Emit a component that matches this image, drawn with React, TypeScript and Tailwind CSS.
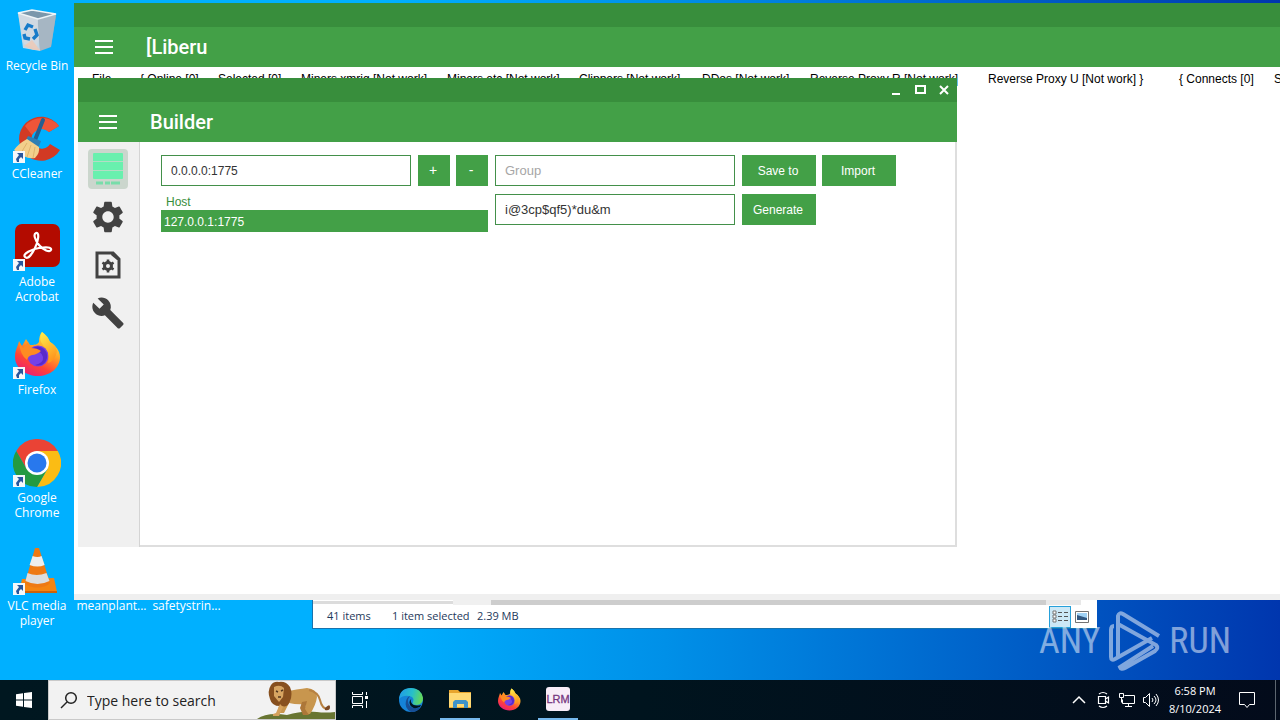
import { MdBuild, MdSettings } from "react-icons/md";
import type { ReactNode } from "react";

const MENU = [
  { label: "File", gap: "ml-[18px] w-12" },
  { label: "{ Online [0]", gap: "w-[78px]" },
  { label: "Selected [0]", gap: "w-[83px]" },
  { label: "Miners xmrig [Not work]", gap: "w-[146px]" },
  { label: "Miners etc [Not work]", gap: "w-[132px]" },
  { label: "Clippers [Not work]", gap: "w-[123px]" },
  { label: "DDos [Not work]", gap: "w-[108px]" },
  { label: "Reverse Proxy R [Not work]", gap: "w-[178px]" },
  { label: "Reverse Proxy U [Not work] }", gap: "w-[191px]" },
  { label: "{ Connects [0]", gap: "w-[95px]" },
  { label: "Selected [0]", gap: "w-[83px]" },
];

function BinIcon() {
  return (
    <svg viewBox="0 0 48 48" className="size-12" aria-hidden="true">
      <path d="M5 6 28 12 24 42 11 37Z" fill="#b6c4cf" />
      <path d="M24 12 43 8 38 39 26 43Z" fill="#8fa6b8" />
      <path d="M5 6 25 12 27 44 10 41Z" fill="#d3dce3" opacity=".9" />
      <path d="M25 12 43 8 38 40 27 44Z" fill="#a6b6c3" />
      <path d="M5 6 19 3 43 7 25 12Z" fill="#7b97ab" stroke="#eff4f7" strokeWidth="1.5" />
      <path d="m11 39 8-6 8 10-7 0Z" fill="#f3c6ae" opacity=".7" />
      <g fill="none" stroke="#167bc9" strokeWidth="3.4">
        <path d="m12 23 3-5 5 2" />
        <path d="m22 22 2 6-4 4" />
        <path d="m17 32-5-1-1-4" />
      </g>
    </svg>
  );
}

function CCleanerIcon() {
  return (
    <svg viewBox="0 0 48 48" className="size-12" aria-hidden="true">
      <path d="M46 11A22 22 0 1 0 47 35L37 29A10 10 0 1 1 36 17Z" fill="#d23a24" />
      <path d="M46 11A22 22 0 0 0 12 11L19 20Q27 10 36 17Z" fill="#ef5538" />
      <path d="m30 5-8 20" stroke="#245f91" strokeWidth="4" strokeLinecap="round" />
      <path d="m15 21 13 5-3 8-13-7Z" fill="#2f7fb4" />
      <path d="M14 24Q5 29 1 35q12 10 21 8 5-5 4-11Z" fill="#f2cf8b" />
      <path d="m14 28-6 10m10-8-4 12m8-10-2 11" stroke="#dfb36b" />
    </svg>
  );
}

function AcrobatIcon() {
  return (
    <svg viewBox="0 0 48 48" className="size-12" aria-hidden="true">
      <rect x="2" y="1" width="45" height="43" rx="7" fill="#b30b00" />
      <path
        d="M23 10c4-1 2 9-1 15s-7 12-10 9 7-8 14-9 13-1 12 2-8 0-12-5-6-11-3-12Z"
        fill="none"
        stroke="#fff"
        strokeWidth="2.2"
      />
    </svg>
  );
}

function FirefoxIcon({ className = "size-12" }: { className?: string }) {
  return (
    <svg viewBox="0 0 48 48" className={className} aria-hidden="true">
      <defs>
        <linearGradient id="fox" x1=".8" y1="0" x2=".25" y2="1">
          <stop offset="0" stopColor="#fff44f" />
          <stop offset=".4" stopColor="#ffa025" />
          <stop offset=".7" stopColor="#ff4436" />
          <stop offset="1" stopColor="#e81a7c" />
        </linearGradient>
        <linearGradient id="foxTail" x1="0" y1="0" x2=".4" y2="1">
          <stop offset="0" stopColor="#fff14c" />
          <stop offset="1" stopColor="#ff981e" />
        </linearGradient>
      </defs>
      <path
        d="M29 1c4 3 6 7 8 10 6 4 10 9 10 15 0 11-10 19-22 19S2 37 2 26c0-7 3-11 4-16l3 5 4-7 4 6c4 0 7 0 9-3 0-4 1-8 3-10Z"
        fill="url(#fox)"
      />
      <circle cx="25" cy="25" r="10.5" fill="#7541e8" />
      <path d="M18 18q7-5 13 0 5 5 2 12-4 6-11 4 9-2 8-8-2-7-12-8Z" fill="#592acb" />
      <path d="M6 11l4 6 5-6 3 6q6 0 10 3-5 4-9 4-4 1-5 5Q7 24 6 11Z" fill="#ff8b22" />
      <path d="M29 1q-4 7 1 13 8 7 5 18 7-2 9-12-1-6-7-9-2-6-8-10Z" fill="url(#foxTail)" />
    </svg>
  );
}

function ChromeIcon() {
  return (
    <svg viewBox="0 0 48 48" className="size-12" aria-hidden="true">
      <path d="M3.2 12A24 24 0 0 1 44.8 12L24 12 13.6 30Z" fill="#ea4335" />
      <path d="M44.8 12A24 24 0 0 1 24 48L34.4 30 24 12Z" fill="#fbbc14" />
      <path d="M24 48A24 24 0 0 1 3.2 12L13.6 30 34.4 30Z" fill="#249a41" />
      <circle cx="24" cy="24" r="12" fill="#fff" />
      <circle cx="24" cy="24" r="9.5" fill="#2878ed" />
    </svg>
  );
}

function VlcIcon() {
  return (
    <svg viewBox="0 0 48 48" className="size-12" aria-hidden="true">
      <path d="m9 32 32-1 3 14H6Z" fill="#f58410" />
      <path d="M6 44h38v2H6Z" fill="#cc6208" />
      <path d="M22 1h4l11 35c-5 6-21 6-25 0Z" fill="#ee7913" />
      <path d="M19.6 9q5 2 9 0l3 9q-7 3-15 0Z" fill="#eee" />
      <path d="M14.5 26q9 4 19 0l3 8q-12 6-24 0Z" fill="#ddd" />
    </svg>
  );
}

const SHORTCUTS: { lines: string[]; icon: ReactNode; linked: boolean }[] = [
  { lines: ["Recycle Bin"], icon: <BinIcon />, linked: false },
  { lines: ["CCleaner"], icon: <CCleanerIcon />, linked: true },
  { lines: ["Adobe", "Acrobat"], icon: <AcrobatIcon />, linked: true },
  { lines: ["Firefox"], icon: <FirefoxIcon />, linked: true },
  { lines: ["Google", "Chrome"], icon: <ChromeIcon />, linked: true },
  { lines: ["VLC media", "player"], icon: <VlcIcon />, linked: true },
];

function Shortcut({ lines, icon, linked }: { lines: string[]; icon: ReactNode; linked: boolean }) {
  return (
    <button type="button" className="flex h-[108px] w-[74px] flex-col items-center text-[12px] leading-[15px] text-white">
      <span className="relative mb-[3px] block">
        {icon}
        {linked && (
          <svg viewBox="0 0 12 12" className="absolute bottom-0 left-0 size-3" aria-hidden="true">
            <path d="M0 0h12v12H0Z" fill="#f4f7fa" />
            <path d="M4 2h6v6L8 6 6 8v3H4L3 8l3-4Z" fill="#28569c" />
          </svg>
        )}
      </span>
      {lines.map((line) => (
        <span key={line} className="block whitespace-nowrap">
          {line}
        </span>
      ))}
    </button>
  );
}

function AppBar({ title }: { title: string }) {
  return (
    <header className="flex h-10 shrink-0 items-center bg-[#43a047] pl-5 text-white">
      <button type="button" aria-label="Menu">
        <svg viewBox="0 0 20 16" className="h-4 w-5" aria-hidden="true">
          <path d="M1 2h18M1 8h18M1 14h18" stroke="currentColor" strokeWidth="2" />
        </svg>
      </button>
      <h1 className="ml-8 font-[Roboto,sans-serif] text-[20px] font-medium leading-6">{title}</h1>
    </header>
  );
}

function ActionButton({ label, className }: { label: string; className: string }) {
  return (
    <button type="button" className={`h-[31px] bg-[#43a047] pr-[2px] text-white ${className}`}>
      {label}
    </button>
  );
}

/** Icon strip on the left of the builder window. */
function ToolTabs() {
  return (
    <nav className="flex w-[62px] shrink-0 flex-col items-center gap-2 border-r border-[#d4d4d4] bg-[#f0f0f0] pr-px pt-[7px] text-[#424242]">
      <button type="button" aria-label="Hosts" className="flex h-10 w-10 items-center justify-center rounded bg-[#cbd6cd]">
        <svg viewBox="0 0 32 36" className="h-9 w-8" aria-hidden="true">
          <rect x="1" y="2" width="30" height="26" rx="1" fill="#69f0ae" />
          <path d="M1 10.5h30M1 19.5h30" stroke="#b4dcc5" />
          <path d="M4 32h7m2 0h5m1 0h9" stroke="#78ddaa" strokeWidth="3" />
        </svg>
      </button>
      <button type="button" aria-label="Settings" className="flex h-10 w-10 items-center justify-center">
        <MdSettings size={38} />
      </button>
      <button type="button" aria-label="Assembly" className="flex h-10 w-10 items-center justify-center">
        <svg viewBox="0 0 26 28" className="h-7 w-[26px]" aria-hidden="true">
          <path d="M2 2h16l6 6v18H2Z" fill="none" stroke="currentColor" strokeWidth="3" />
          <path d="m17 1 8 8h-3l-6-5Z" fill="currentColor" />
          <circle cx="13" cy="15" r="3.5" fill="none" stroke="currentColor" strokeWidth="3" />
          <path
            d="M13 8.500v3m0 7v3M7.400 11.700 10 13.200m6 3.600 2.600 1.500M7.400 18.300 10 16.800m6-3.600 2.600-1.500"
            stroke="currentColor"
            strokeWidth="2.6"
          />
        </svg>
      </button>
      <button type="button" aria-label="Tools" className="flex h-10 w-10 items-center justify-center">
        <MdBuild size={34} />
      </button>
    </nav>
  );
}

function BuilderWindow() {
  const field = "h-[31px] border border-[#43904a] bg-white px-[9px] text-[#333] outline-none placeholder:text-[#a6a6a6]";
  return (
    <section className="absolute left-[78px] top-[78px] flex h-[469px] w-[879px] flex-col bg-white font-['Liberation_Sans',Arial,sans-serif]">
      <div className="flex h-6 shrink-0 items-center justify-end bg-[#388e3c] pr-px text-white">
        <button type="button" aria-label="Minimize" className="flex w-6 justify-center">
          <svg viewBox="0 0 16 16" className="size-4" aria-hidden="true">
            <path d="M4 11h8v2H4Z" fill="currentColor" />
          </svg>
        </button>
        <button type="button" aria-label="Maximize" className="flex w-6 justify-center">
          <svg viewBox="0 0 16 16" className="size-4" aria-hidden="true">
            <path d="M4 4h9v7H4Z" fill="none" stroke="currentColor" strokeWidth="2" />
          </svg>
        </button>
        <button type="button" aria-label="Close" className="flex w-6 justify-center">
          <svg viewBox="0 0 16 16" className="size-4" aria-hidden="true">
            <path d="m4 4 8 8m0-8-8 8" stroke="currentColor" strokeWidth="2" />
          </svg>
        </button>
      </div>
      <AppBar title="Builder" />
      <div className="flex min-h-0 flex-1">
        <ToolTabs />
        <div className="flex flex-1 items-start gap-[7px] border-b-2 border-r-2 border-[#dedede] pl-[21px] pt-[13px]">
          <div className="w-[327px]">
            <div className="flex">
              <input aria-label="Host address" defaultValue="0.0.0.0:1775" className={`w-[250px] text-[12px] ${field}`} />
              <ActionButton label="+" className="ml-[7px] w-8 text-[14px]" />
              <ActionButton label="-" className="ml-[6px] w-8 text-[14px]" />
            </div>
            <table className="mt-2 w-full text-left text-[12px]">
              <thead>
                <tr>
                  <th className="h-4 pl-[5px] font-normal leading-4 text-[#388e3c]">Host</th>
                </tr>
              </thead>
              <tbody>
                <tr className="bg-[#43a047] text-white">
                  <td className="h-[22px] pl-[3px] pt-[2px] leading-5">127.0.0.1:1775</td>
                </tr>
              </tbody>
            </table>
          </div>
          <div className="flex w-60 flex-col gap-2">
            <input aria-label="Group" placeholder="Group" className={`text-[13px] ${field}`} />
            <input aria-label="Mutex" defaultValue="i@3cp$qf5)*du&m" className={`text-[13px] ${field}`} />
          </div>
          <div className="flex flex-col gap-2">
            <div className="flex gap-[6px]">
              <ActionButton label="Save to" className="w-[74px] text-[12px]" />
              <ActionButton label="Import" className="w-[74px] text-[12px]" />
            </div>
            <ActionButton label="Generate" className="w-[74px] text-[12px]" />
          </div>
        </div>
      </div>
    </section>
  );
}

function MainWindow() {
  return (
    <section className="absolute left-[74px] right-0 top-[3px] flex h-[597px] flex-col overflow-hidden border-b-[6px] border-[#efefef] bg-white font-['Liberation_Sans',Arial,sans-serif]">
      <div className="h-6 shrink-0 bg-[#388e3c]" />
      <AppBar title="[Liberu" />
      <nav className="flex pt-1 text-[12px] leading-4 text-black">
        {MENU.map(({ label, gap }, index) => (
          <button key={index} type="button" className={`shrink-0 whitespace-nowrap text-left ${gap}`}>
            {label}
          </button>
        ))}
      </nav>
    </section>
  );
}

/** Bottom edge of the file explorer, mostly hidden by the main window. */
function ExplorerStatus() {
  return (
    <section className="absolute left-[312px] top-[598px] w-[785px] border-b border-l border-[#1873ad] bg-white text-[11px] text-[#1e395b]">
      <div className="flex h-[7px] items-center pt-[2px]">
        <div className="h-[3px] w-[140px] bg-[#dcdcdc]" />
        <div className="h-[5px] w-[38px] bg-[#f0f0f0]" />
        <div className="h-[5px] flex-1 bg-[#cdcdcd]" />
        <div className="mr-4 h-[5px] w-[35px] bg-[#e8e8e8]" />
      </div>
      <div className="flex h-[23px] items-center pl-[14px]">
        <span className="w-[65px]">41 items</span>
        <span className="w-[85px] whitespace-nowrap">1 item selected</span>
        <span>2.39 MB</span>
        <button
          type="button"
          aria-label="Details"
          className="ml-auto flex h-[22px] w-[22px] items-center justify-center border border-[#26a0da] bg-[#cce8f6]"
        >
          <svg viewBox="0 0 18 14" className="h-[14px] w-[18px]" aria-hidden="true">
            <path d="M2 1h3v3H2Zm0 4h3v3H2Zm0 4h3v3H2Z" fill="#fff" stroke="#777" />
            <path d="M7 2.500h4m2 0h4M7 6.500h4m2 0h4M7 10.500h4m2 0h4" stroke="#555" />
          </svg>
        </button>
        <button type="button" aria-label="Thumbnails" className="ml-1 mr-2">
          <svg viewBox="0 0 14 12" className="h-3 w-[14px]" aria-hidden="true">
            <path d="M.5.5h13v11H.5Z" fill="#fff" stroke="#737373" />
            <path d="M2 2h10v7H2Z" fill="#9fd2f6" />
            <path d="m2 4 10 3v2H2Z" fill="#315780" />
          </svg>
        </button>
      </div>
    </section>
  );
}

function Watermark() {
  return (
    <div className="pointer-events-none absolute right-[49px] top-[608px] flex h-[66px] w-48 items-center justify-between font-['Liberation_Sans_Narrow','Roboto_Condensed','Liberation_Sans',sans-serif] text-[36px] leading-[66px] text-white opacity-50">
      <span>ANY</span>
      <svg viewBox="72 0 54 66" className="h-[66px] w-[54px] shrink-0" fill="none" stroke="currentColor" strokeWidth="4" aria-hidden="true">
        <path d="m78 18q-3 0-3 4v27q0 4 4 2l37-21M82 50V8q1-4 5-2l36 22" />
        <path d="m82 16 38 21q3 3-1 6L89 60q-4 2-5-1l33-21" />
      </svg>
      <span>RUN</span>
    </div>
  );
}

function TaskView() {
  return (
    <svg viewBox="0 0 18 18" className="size-[18px]" fill="none" stroke="currentColor" aria-hidden="true">
      <path d="M1.500 5.500h10v7h-10ZM1.500 1v2.500h10V1M1.500 17v-2.500h10V17M15.500 1v3M15.500 10v7" />
      <path d="M14 5h3v3h-3Z" fill="currentColor" stroke="none" />
    </svg>
  );
}

function Lion() {
  return (
    <svg viewBox="0 0 80 38" className="h-[38px] w-20" aria-hidden="true">
      <path d="M2 38Q12 31 32 34q16-5 30-3 8 1 18 0v7Z" fill="#687532" />
      <path d="M28 11q15-3 24-4 10 1 10 9-1 8-7 17h-7l3-10q-9 1-17-1l-5 10h-7l5-18Z" fill="#c8964e" />
      <path d="M54 9q9 2 11 10 2 9 8 9" fill="none" stroke="#b78142" strokeWidth="2" />
      <path d="M70 27q5-5 5-1 0 4-5 3Z" fill="#7c4823" />
      <path d="m52 20-2 8 4 6h-6l-3-7 2-6Z" fill="#ad7738" />
      <path d="M16 4q3-4 8-3 7-1 11 5 3 7 0 14-2 7-8 5-10 1-12-7-3-8 1-14Z" fill="#87501f" />
      <path d="M19 6q6-3 10 1l-1 9-4 5-5-6Z" fill="#d7a562" />
      <path d="m21 10 2 1m3-1 2-1m-5 7h3" stroke="#51351e" strokeWidth="1.5" />
      <path d="m25 23 3 3-4 9h-6v-2l3-1Z" fill="#d5a15c" />
    </svg>
  );
}

function TaskApps() {
  return (
    <div className="flex h-full">
      <button type="button" aria-label="Task view" className="flex w-12 items-center justify-center text-white">
        <TaskView />
      </button>
      <button type="button" aria-label="Edge" className="ml-[3px] flex w-12 items-center justify-center">
        <svg viewBox="0 0 24 24" className="size-6" aria-hidden="true">
          <defs>
            <linearGradient id="edge" x1="0" y1=".2" x2="1" y2=".4">
              <stop offset="0" stopColor="#209ae8" />
              <stop offset=".55" stopColor="#27bfca" />
              <stop offset="1" stopColor="#65d957" />
            </linearGradient>
          </defs>
          <circle cx="12" cy="12" r="12" fill="#1583d8" />
          <path d="M0 11Q1 0 12 0q10 0 12 10 0 6-6 7-6 0-4-3 2-5-4-6Q4 7 0 11Z" fill="url(#edge)" />
          <path d="M11 8q-4 5 0 10 4 4 11 1-3 5-10 5Q5 20 7 13q1-4 4-5Z" fill="#174f96" />
          <path d="M14 10q-3 1-2 4 2 5 10 3l-1 2q-7 3-10-2-2-5 3-7Z" fill="#00151e" />
        </svg>
      </button>
      <button type="button" aria-label="File Explorer" className="ml-[5px] flex w-10 items-center justify-center border-b-2 border-[#76b9ed]">
        <svg viewBox="0 0 24 20" className="h-5 w-6" aria-hidden="true">
          <path d="M1 1h9l2 2h11v16H1Z" fill="#e8a52e" />
          <path d="M1 4h22v14H1Z" fill="#ffd974" />
          <path d="M5 19v-6l2-2h11l2 2v6h-4v-4H9v4Z" fill="#3f93c9" />
        </svg>
      </button>
      <button type="button" aria-label="Firefox" className="ml-[5px] flex w-12 items-center justify-center">
        <FirefoxIcon className="size-6" />
      </button>
      <button type="button" aria-label="LRM" className="ml-[5px] flex w-10 items-center justify-center border-b-2 border-[#76b9ed]">
        <svg viewBox="0 0 24 24" className="size-6" aria-hidden="true">
          <rect width="24" height="24" rx="3" fill="#f8edf8" />
          <text x="12" y="16" textAnchor="middle" fontFamily="Liberation Sans, sans-serif" fontSize="11" fill="#75367e" stroke="#75367e" strokeWidth=".3">
            LRM
          </text>
        </svg>
      </button>
    </div>
  );
}

function Tray() {
  return (
    <div className="ml-auto flex h-full items-center text-white">
      <button type="button" aria-label="Show hidden icons" className="flex w-6 justify-center">
        <svg viewBox="0 0 14 10" className="h-[10px] w-[14px]" fill="none" stroke="currentColor" aria-hidden="true">
          <path d="m1 8 6-6 6 6" strokeWidth="1.5" />
        </svg>
      </button>
      <button type="button" aria-label="Meet Now" className="flex w-6 justify-center">
        <svg viewBox="0 0 16 18" className="h-[18px] w-4" fill="none" stroke="currentColor" aria-hidden="true">
          <path d="M3.500 5.500h7v7h-7ZM10.500 8l3-2v6l-3-2M4 3q4-3 8 0M4 15q4 3 8 0" strokeWidth="1.2" />
        </svg>
      </button>
      <button type="button" aria-label="Network" className="flex w-6 justify-center">
        <svg viewBox="0 0 18 16" className="h-4 w-[18px]" fill="none" stroke="currentColor" aria-hidden="true">
          <path d="M6.500 3.500h10v8h-12v-4M1.500 1.500h4v4h-4Zm2 4v5M10.500 11.500v3M7 14.500h7" />
        </svg>
      </button>
      <button type="button" aria-label="Volume" className="flex w-6 justify-center">
        <svg viewBox="0 0 18 16" className="h-4 w-[18px]" fill="none" stroke="currentColor" aria-hidden="true">
          <path d="M1.500 5.500h2l4-4v13l-4-4h-2ZM10 6q2 2 0 4M12 4q4 4 0 8M14 2q5 6 0 12" />
        </svg>
      </button>
      <time className="w-16 text-center text-[11px] leading-[18px]">
        <span className="block">6:58 PM</span>
        <span className="block">8/10/2024</span>
      </time>
      <button type="button" aria-label="Notifications" className="flex w-10 justify-center">
        <svg viewBox="0 0 18 18" className="size-[18px]" fill="none" stroke="currentColor" aria-hidden="true">
          <path d="M1.500 1.500h15v12h-5l-2.500 3-2.500-3h-5Z" />
        </svg>
      </button>
      <div className="ml-2 h-full w-[5px] border-l border-[#5d6670]" />
    </div>
  );
}

function Taskbar() {
  return (
    <footer className="flex h-10 shrink-0 bg-linear-to-r from-[#001720] via-[#00141e] to-[#030b1b]">
      <button type="button" aria-label="Start" className="flex w-12 items-center justify-center">
        <svg viewBox="0 0 16 16" className="size-4" fill="#fff" aria-hidden="true">
          <path d="M0 2.200 7 1.200v6.300H0ZM8 1l8-1v7.500H8ZM0 8.500h7v6.300l-7-1ZM8 8.500h8V16l-8-1Z" />
        </svg>
      </button>
      <label className="flex w-72 items-center border border-[#c9c9c9] bg-[#f2f2f2] pl-[11px] text-[#222]">
        <svg viewBox="0 0 18 18" className="size-[18px] shrink-0" fill="none" stroke="currentColor" aria-hidden="true">
          <path d="M7 11 1 17" strokeWidth="1.5" />
          <circle cx="11" cy="7" r="5.3" strokeWidth="1.5" />
        </svg>
        <input
          aria-label="Search"
          placeholder="Type here to search"
          className="ml-[9px] min-w-0 flex-1 bg-transparent text-[14px] outline-none placeholder:text-[#222]"
        />
        <Lion />
      </label>
      <TaskApps />
      <Tray />
    </footer>
  );
}

export default function App() {
  return (
    <div className="flex min-h-screen flex-col font-['Open_Sans','Noto_Sans',sans-serif]">
      <main className="relative min-h-[680px] flex-1 overflow-hidden bg-linear-to-r from-[#00b0ff] from-30% via-[#0090e8] via-52% to-[#0036ae]">
        <div className="flex flex-col pt-[7px]">
          {SHORTCUTS.map((shortcut) => (
            <Shortcut key={shortcut.lines[0]} {...shortcut} />
          ))}
        </div>
        <div className="absolute left-[74px] top-[598px] flex text-[12px] leading-[15px] text-white">
          <span className="w-[75px] text-center">meanplant...</span>
          <span className="w-[75px] text-center">safetystrin...</span>
        </div>
        <ExplorerStatus />
        <MainWindow />
        <BuilderWindow />
        <Watermark />
      </main>
      <Taskbar />
    </div>
  );
}
